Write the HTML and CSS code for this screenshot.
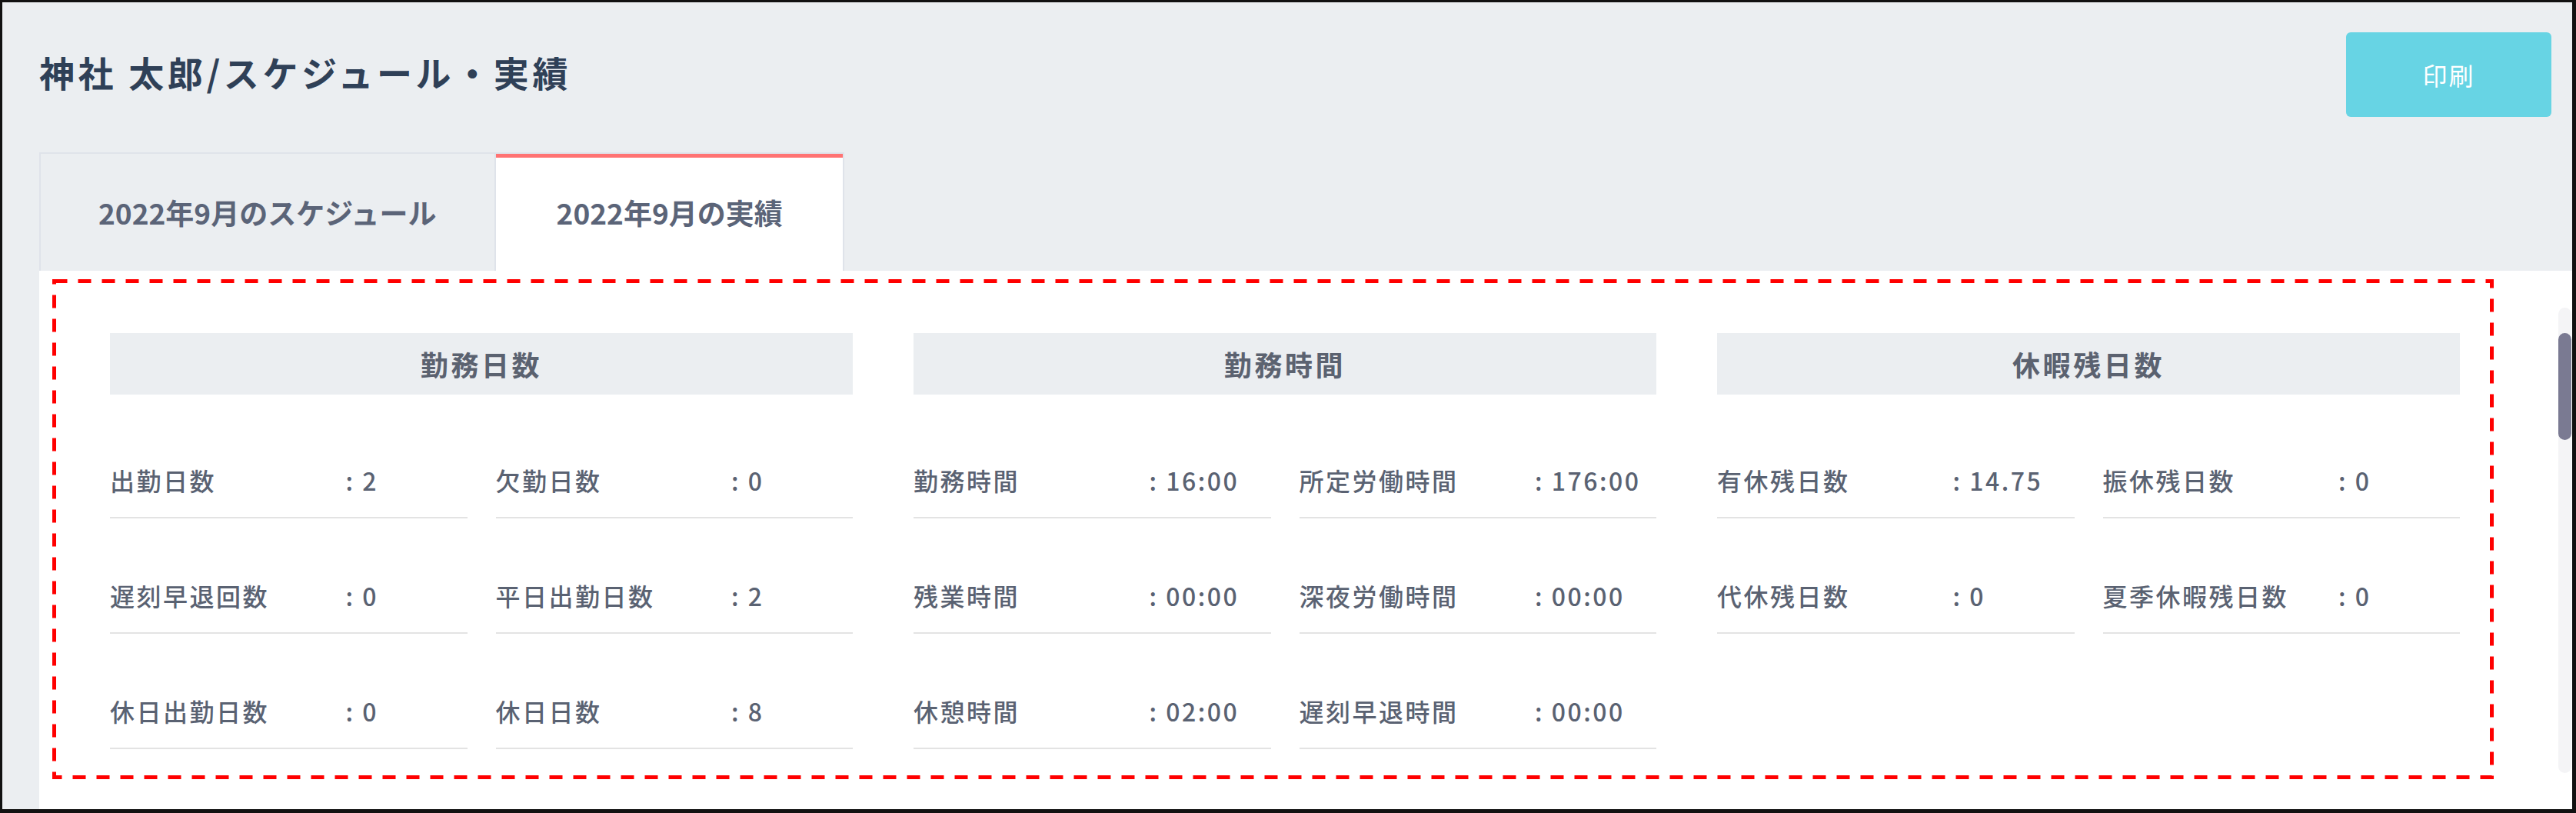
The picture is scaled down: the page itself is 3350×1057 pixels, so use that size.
FILE: index.html
```html
<!DOCTYPE html>
<html lang="ja">
<head>
<meta charset="utf-8">
<title>神社 太郎/スケジュール・実績</title>
<link rel="stylesheet" href="styles.css">
</head>
<body>
<div class="frame">
  <header class="page-header">
    <h1 class="title">神社 太郎/スケジュール・実績</h1>
    <button class="print-btn" type="button">印刷</button>
  </header>
  <nav class="tabs">
    <div class="tab">2022年9月のスケジュール</div>
    <div class="tab active">2022年9月の実績</div>
  </nav>
  <main class="panel">
    <div class="results">
      <svg class="highlight" xmlns="http://www.w3.org/2000/svg" aria-hidden="true"><rect class="highlight-rect"/></svg>

      <section class="group">
        <h2 class="group-title">勤務日数</h2>
        <div class="items">
          <div class="item"><span class="label">出勤日数</span><span class="value">: 2</span></div>
          <div class="item"><span class="label">欠勤日数</span><span class="value">: 0</span></div>
          <div class="item"><span class="label">遅刻早退回数</span><span class="value">: 0</span></div>
          <div class="item"><span class="label">平日出勤日数</span><span class="value">: 2</span></div>
          <div class="item"><span class="label">休日出勤日数</span><span class="value">: 0</span></div>
          <div class="item"><span class="label">休日日数</span><span class="value">: 8</span></div>
        </div>
      </section>

      <section class="group">
        <h2 class="group-title">勤務時間</h2>
        <div class="items">
          <div class="item"><span class="label">勤務時間</span><span class="value">: 16:00</span></div>
          <div class="item"><span class="label">所定労働時間</span><span class="value">: 176:00</span></div>
          <div class="item"><span class="label">残業時間</span><span class="value">: 00:00</span></div>
          <div class="item"><span class="label">深夜労働時間</span><span class="value">: 00:00</span></div>
          <div class="item"><span class="label">休憩時間</span><span class="value">: 02:00</span></div>
          <div class="item"><span class="label">遅刻早退時間</span><span class="value">: 00:00</span></div>
        </div>
      </section>

      <section class="group">
        <h2 class="group-title">休暇残日数</h2>
        <div class="items">
          <div class="item"><span class="label">有休残日数</span><span class="value">: 14.75</span></div>
          <div class="item"><span class="label">振休残日数</span><span class="value">: 0</span></div>
          <div class="item"><span class="label">代休残日数</span><span class="value">: 0</span></div>
          <div class="item"><span class="label">夏季休暇残日数</span><span class="value">: 0</span></div>
        </div>
      </section>
    </div>
    <div class="scrollbar"><div class="thumb"></div></div>
  </main>
</div>
</body>
</html>
```

FILE: styles.css
```css
html, body {
  margin: 0;
  width: 3350px;
  height: 1057px;
  overflow: hidden;
}

body {
  font-family: "Noto Sans CJK JP", "Noto Sans", sans-serif;
}

.frame {
  box-sizing: border-box;
  width: 3350px;
  height: 1057px;
  border-style: solid;
  border-color: #111;
  border-width: 3px 5px 5px 3px;
  background: #ebeef1;
  display: flex;
  flex-direction: column;
}

.page-header {
  display: flex;
  justify-content: space-between;
  align-items: flex-start;
  padding: 39px 27px 0 48px;
}

.title {
  margin: 21px 0 0;
  font-size: 46px;
  line-height: 60px;
  letter-spacing: 0.1em;
  font-weight: 700;
  color: #2f4057;
}

.print-btn {
  width: 267px;
  height: 110px;
  border: none;
  border-radius: 6px;
  background: #67d4e4;
  color: #fff;
  font-family: "Noto Sans CJK JP", "Noto Sans", sans-serif;
  font-size: 32px;
  font-weight: 400;
  letter-spacing: 2px;
  padding: 0;
}

.tabs {
  display: flex;
  margin: 46px 0 0 48px;
}

.tab {
  box-sizing: border-box;
  height: 154px;
  padding: 0 75px;
  display: flex;
  align-items: center;
  font-size: 37px;
  font-weight: 700;
  color: #5b6478;
  border-top: 2px solid #dfe3ea;
  border-left: 2px solid #dfe3ea;
}

.tab.active {
  padding: 0 78px 0 79px;
  background: #fff;
  border-right: 2px solid #dfe3ea;
  box-shadow: inset 0 5px 0 #ff7373;
}

.panel {
  flex: 1;
  margin-left: 48px;
  background: #fff;
  position: relative;
  padding: 11px 0 0 17px;
}

.results {
  position: relative;
  box-sizing: border-box;
  width: 3175px;
  padding: 70px 44px 39px 75px;
  display: grid;
  grid-template-columns: repeat(3, 1fr);
  column-gap: 79px;
}

.highlight {
  position: absolute;
  inset: 0;
  width: 100%;
  height: 100%;
  pointer-events: none;
  overflow: visible;
}

.highlight-rect {
  x: 2.5px;
  y: 2.5px;
  width: calc(100% - 5px);
  height: calc(100% - 5px);
  fill: none;
  stroke: #ff0000;
  stroke-width: 5px;
  stroke-dasharray: 17 14;
}

.group-title {
  margin: 0;
  height: 80px;
  background: #ebeef1;
  display: flex;
  align-items: center;
  justify-content: center;
  font-size: 36px;
  font-weight: 700;
  letter-spacing: 0.1em;
  color: #5b6270;
}

.items {
  display: grid;
  grid-template-columns: 1fr 1fr;
  column-gap: 37px;
  row-gap: 76px;
  padding-top: 87px;
}

.item {
  display: flex;
  line-height: 48px;
  padding-bottom: 24px;
  border-bottom: 2px solid #e3e3e3;
  font-size: 32px;
  font-weight: 500;
  letter-spacing: 2.5px;
  color: #5a6272;
}

.label {
  flex: 0 0 66%;
  white-space: nowrap;
}

.value {
  white-space: nowrap;
}

.scrollbar {
  position: absolute;
  right: 1px;
  top: 48px;
  bottom: 47px;
  width: 17px;
  background: #f4f4f6;
  border-radius: 9px;
}

.thumb {
  margin-top: 33px;
  height: 139px;
  background: #7a7a92;
  border-radius: 9px;
}
```
